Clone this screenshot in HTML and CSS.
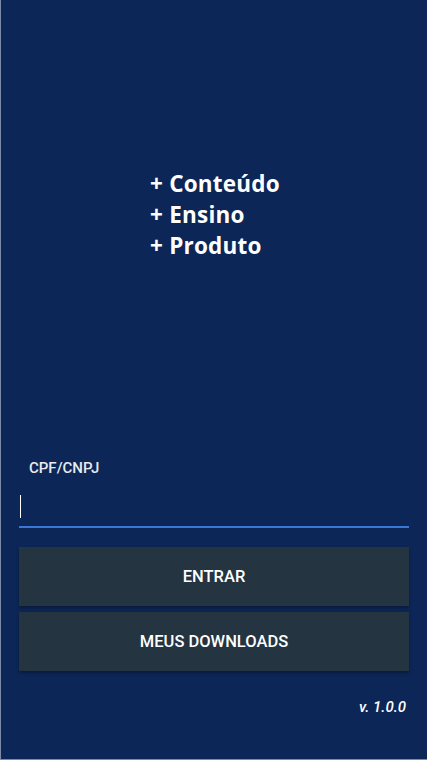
FILE: index.html
```html
<!DOCTYPE html>
<html lang="pt-BR">
<head>
<meta charset="utf-8">
<title>Login</title>
<link rel="stylesheet" href="styles.css">
</head>
<body>
<div class="screen">
  <div class="logo">
    <div class="logo-line">+ Conteúdo</div>
    <div class="logo-line">+ Ensino</div>
    <div class="logo-line">+ Produto</div>
  </div>
  <form class="form">
    <label class="label">CPF/CNPJ</label>
    <div class="field"><span class="caret"></span></div>
    <button type="button" class="btn btn-first">ENTRAR</button>
    <button type="button" class="btn">MEUS DOWNLOADS</button>
  </form>
  <div class="version">v. 1.0.0</div>
</div>
</body>
</html>
```
FILE: styles.css
```css
html, body {
  margin: 0;
  padding: 0;
  background: #0c2757;
}
.screen {
  width: 427px;
  height: 760px;
  box-sizing: border-box;
  background: #0c2757;
  border-left: 1px solid #7c8aa6;
  border-bottom: 1px solid #7c8aa6;
  display: flex;
  flex-direction: column;
  font-family: Roboto, "Liberation Sans", sans-serif;
  overflow: hidden;
}
.logo {
  margin-top: 168px;
  align-self: center;
  margin-left: 2px;
  color: #ffffff;
  font-family: "Open Sans", Lato, sans-serif;
  font-weight: 700;
  font-size: 22.5px;
  line-height: 31px;
  letter-spacing: 0.2px;
}
.form {
  margin: 198px 0 0 0;
  padding: 0 18px;
  display: flex;
  flex-direction: column;
}
.label {
  color: #e8eaee;
  font-size: 15px;
  line-height: 18px;
  padding-left: 10px;
  font-weight: 500;
}
.field {
  margin-top: 15px;
  height: 36px;
  border-bottom: 2px solid #3a78d8;
  display: flex;
  align-items: flex-start;
  padding-top: 3px;
  box-sizing: border-box;
}
.caret {
  width: 1px;
  height: 23px;
  background: #ffffff;
  margin-left: 1px;
}
.btn {
  height: 59px;
  border: none;
  border-radius: 0;
  background: #243441;
  color: #ffffff;
  font-family: Roboto, "Liberation Sans", sans-serif;
  font-weight: 500;
  font-size: 16.5px;
  box-shadow: 0 2px 3px rgba(0,0,0,0.35);
  margin-top: 6px;
  padding: 0;
  width: 100%;
}
.btn-first {
  margin-top: 19px;
}
.version {
  margin-top: 27px;
  align-self: flex-end;
  margin-right: 21px;
  color: #ffffff;
  font-size: 15px;
  font-style: italic;
  font-weight: 500;
}
```
